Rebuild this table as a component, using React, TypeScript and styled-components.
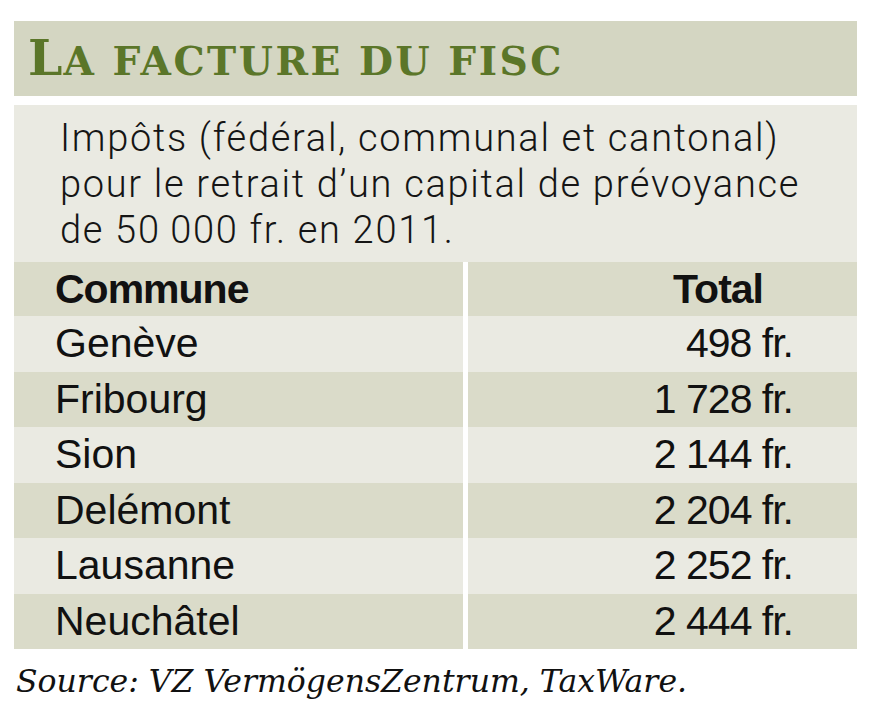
import React from "react";
import styled, { createGlobalStyle } from "styled-components";

const GlobalStyle = createGlobalStyle`
  html, body { margin: 0; padding: 0; background: #ffffff; }
  body { font-family: "Liberation Sans", Arial, sans-serif; color: #111; }
`;

const Page = styled.div`
  width: 882px;
  box-sizing: border-box;
  padding: 21px 25px 0 14px;
`;

const TitleBar = styled.header`
  height: 75px;
  background: #d4d6c2;
  display: flex;
  align-items: center;
  padding-left: 14px;
`;

const Title = styled.h1`
  margin: 0;
  font-family: "DejaVu Serif", "Liberation Serif", serif;
  font-weight: bold;
  font-size: 49px;
  color: #5b7629;
  line-height: 1;
  letter-spacing: 1px;
`;

const SmallCaps = styled.span`
  font-size: 0.8em;
  text-transform: uppercase;
  letter-spacing: 2.5px;
`;

const Intro = styled.p`
  margin: 9px 0 0 0;
  background: #eaeae2;
  padding: 10px 0 9px 46px;
  font-family: "Roboto", "Liberation Sans", sans-serif;
  font-weight: 300;
  font-size: 38px;
  line-height: 46px;
  letter-spacing: 1.7px;
  color: #151515;
`;

const Row = styled.div<{ $head?: boolean }>`
  display: grid;
  grid-template-columns: 449px 389px;
  column-gap: 5px;
  height: ${(p) => (p.$head ? "54px" : "55.5px")};
`;

const Cell = styled.div<{ $dark: boolean; $right?: boolean; $pad?: number }>`
  background: ${(p) => (p.$dark ? "#dadbc9" : "#eaeae2")};
  display: flex;
  align-items: center;
  justify-content: ${(p) => (p.$right ? "flex-end" : "flex-start")};
  padding: ${(p) => (p.$right ? `0 ${p.$pad ?? 64}px 0 0` : "0 0 0 41px")};
  font-size: 41px;
  color: #111;
  white-space: nowrap;
`;

const HeadText = styled.span`
  font-weight: bold;
  letter-spacing: -1px;
`;

const Amount = styled.span`
  letter-spacing: -1px;
`;

const Source = styled.p`
  margin: 14px 0 0 2px;
  font-family: "DejaVu Serif", "Liberation Serif", serif;
  font-style: italic;
  font-size: 31.5px;
  color: #111;
`;

const data: [string, string][] = [
  ["Genève", "498 fr."],
  ["Fribourg", "1\u00a0728 fr."],
  ["Sion", "2\u00a0144 fr."],
  ["Delémont", "2\u00a0204 fr."],
  ["Lausanne", "2\u00a0252 fr."],
  ["Neuchâtel", "2\u00a0444 fr."],
];

export default function App() {
  return (
    <>
      <GlobalStyle />
      <Page>
        <TitleBar>
          <Title>
            L<SmallCaps>a facture du fisc</SmallCaps>
          </Title>
        </TitleBar>
        <Intro>
          Impôts (fédéral, communal et cantonal)
          <br />
          pour le retrait d’un capital de prévoyance
          <br />
          de 50{"\u2009"}000 fr. en 2011.
        </Intro>
        <div>
          <Row $head>
            <Cell $dark>
              <HeadText>Commune</HeadText>
            </Cell>
            <Cell $dark $right $pad={94}>
              <HeadText>Total</HeadText>
            </Cell>
          </Row>
          {data.map(([name, total], i) => (
            <Row key={name}>
              <Cell $dark={i % 2 === 1}>{name}</Cell>
              <Cell $dark={i % 2 === 1} $right>
                <Amount>{total}</Amount>
              </Cell>
            </Row>
          ))}
        </div>
        <Source>Source: VZ VermögensZentrum, TaxWare.</Source>
      </Page>
    </>
  );
}
